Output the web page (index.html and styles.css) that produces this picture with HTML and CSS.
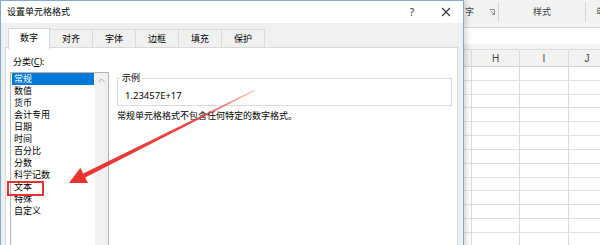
FILE: index.html
```html
<!DOCTYPE html>
<html lang="zh-CN">
  <head>
    <meta charset="UTF-8" />
    <meta name="viewport" content="width=device-width, initial-scale=1.0" />
    <title>设置单元格格式</title>
    <link rel="stylesheet" href="styles.css">
  </head>
  <body>
    <div class="screen">
      <div class="dialog">
        <div class="titlebar">
          <span class="title">设置单元格格式</span>
          <span class="tbtn help">?</span>
          <span class="tbtn close">
            <svg width="10" height="10" viewBox="0 0 10 10"><path d="M1 1L9 9M9 1L1 9" stroke="#333" stroke-width="1.1" fill="none"/></svg>
          </span>
        </div>
        <div class="body">
          <div class="tabs">
            <div class="tab active">数字</div>
            <div class="tab">对齐</div>
            <div class="tab">字体</div>
            <div class="tab">边框</div>
            <div class="tab">填充</div>
            <div class="tab">保护</div>
          </div>
          <div class="panel">
            <div class="label">分类(<u>C</u>):</div>
            <div class="listbox">
              <ul class="items">
                <li class="selected">常规</li>
                <li>数值</li>
                <li>货币</li>
                <li>会计专用</li>
                <li>日期</li>
                <li>时间</li>
                <li>百分比</li>
                <li>分数</li>
                <li>科学记数</li>
                <li>文本</li>
                <li>特殊</li>
                <li>自定义</li>
              </ul>
              <div class="scrollbar">
                <svg width="7" height="5" viewBox="0 0 7 5"><path d="M0.5 4L3.5 1L6.5 4" stroke="#a6a6a6" stroke-width="1" fill="none"/></svg>
              </div>
            </div>
            <div class="detail">
              <fieldset class="sample">
                <legend>示例</legend>
                <div class="value">1.23457E+17</div>
              </fieldset>
              <p class="desc">常规单元格格式不包含任何特定的数字格式。</p>
            </div>
          </div>
        </div>
      </div>

      <div class="sheet">
        <div class="ribbon">
          <div class="grp-end">
            <span>字</span>
            <svg width="6" height="6" viewBox="0 0 6 6"><path d="M0.5 0.5H5.5V5.5M2 2L5 5M3 5.5H5.5V3" stroke="#8a8a8a" stroke-width="1" fill="none"/></svg>
          </div>
          <div class="sep"></div>
          <div class="grp">样式</div>
          <div class="sep"></div>
          <div class="grp-cut">单</div>
        </div>
        <div class="formula"></div>
        <div class="gap"></div>
        <div class="grid">
          <div class="col col-g"><div class="head"></div><div class="cells"></div></div>
          <div class="col col-h"><div class="head">H</div><div class="cells"></div></div>
          <div class="col col-i"><div class="head">I</div><div class="cells"></div></div>
          <div class="col col-j"><div class="head">J</div><div class="cells"></div></div>
        </div>
      </div>

      <svg class="annot" width="600" height="245" viewBox="0 0 600 245">
        <defs>
          <linearGradient id="fade" gradientUnits="userSpaceOnUse" x1="254" y1="90" x2="69" y2="183">
            <stop offset="0" stop-color="#e8312f" stop-opacity="0.35"/>
            <stop offset="0.35" stop-color="#e8312f" stop-opacity="0.9"/>
            <stop offset="1" stop-color="#e8312f"/>
          </linearGradient>
        </defs>
        <polygon fill="url(#fade)" points="69,183 88,183 85.2,177.4 254.4,91 254,90.1 83.2,173.4 80.4,167.8"/>
        <rect x="8" y="182" width="35" height="13" fill="none" stroke="#e8312f" stroke-width="2"/>
      </svg>
    </div>
  </body>
</html>
```

FILE: styles.css
```css
body {
  margin: 0;
  font-family: "Noto Sans", "Noto Sans CJK SC", sans-serif;
  font-size: 9px;
  color: #000;
}

.screen {
  position: relative;
  width: 600px;
  height: 245px;
  overflow: hidden;
  display: flex;
}

/* dialog */
.dialog {
  position: relative;
  z-index: 1;
  box-sizing: border-box;
  width: 464px;
  height: 330px;
  flex-shrink: 0;
  display: flex;
  flex-direction: column;
  background: #f0f0f0;
  border: 1px solid #7faad6;
  border-bottom: none;
  box-shadow: 2px 0 6px rgba(0, 0, 0, 0.18);
}

.titlebar {
  height: 22px;
  display: flex;
  align-items: center;
  background: #fff;
  padding-left: 6px;
}
.title {
  line-height: 12px;
}
.tbtn {
  width: 34px;
  text-align: center;
  line-height: 12px;
  display: flex;
  justify-content: center;
  align-items: center;
}
.help {
  margin-left: auto;
  font-size: 10px;
  color: #333;
}

.body {
  flex: 1;
  display: flex;
  flex-direction: column;
  padding: 6px 5px 0 4px;
}

.tabs {
  display: flex;
  padding-left: 3px;
  height: 19px;
}
.tab {
  box-sizing: border-box;
  width: 43px;
  height: 19px;
  line-height: 18px;
  text-align: center;
  border-top: 1px solid #dadada;
  border-right: 1px solid #dadada;
}
.tab.active {
  width: 42px;
  height: 21px;
  margin-top: -1px;
  background: #fff;
  border: 1px solid #d4d4d4;
  border-bottom: none;
  position: relative;
  z-index: 1;
}

.panel {
  flex: 1;
  margin-top: -1px;
  background: #fff;
  border: 1px solid #d9d9d9;
  display: grid;
  grid-template-columns: 99px 1fr;
  grid-template-rows: 12px 1fr;
  column-gap: 8px;
  row-gap: 4px;
  padding: 8px 5px 0 4px;
}

.label {
  grid-column: 1 / 3;
  padding-left: 3px;
  line-height: 12px;
}

.listbox {
  display: flex;
  border: 1px solid #b4b4b4;
}
.items {
  flex: 1;
  list-style: none;
  margin: 0;
  padding: 0 1px;
}
.items li {
  height: 12px;
  line-height: 12px;
  padding-left: 2px;
}
.items li.selected {
  background: #0078d7;
  color: #fff;
}
.scrollbar {
  width: 13px;
  background: #f0f0f0;
  display: flex;
  justify-content: center;
  padding-top: 5px;
  box-sizing: border-box;
}
.scrollbar svg {
  display: block;
}

.detail {
  display: flex;
  flex-direction: column;
}
.sample {
  margin: 0;
  min-width: 0;
  padding: 6px 7px 3px 2px;
  border: 1px solid #dcdcdc;
}
.sample legend {
  padding: 0 2px;
  line-height: 12px;
}
.value {
  padding-left: 5px;
  line-height: 12px;
  font-size: 9.5px;
}
.desc {
  margin: 4px 0 0;
  line-height: 12px;
}

/* spreadsheet behind the dialog */
.sheet {
  flex: 1;
  display: flex;
  flex-direction: column;
  background: #f3f3f3;
  color: #444;
}

.ribbon {
  box-sizing: border-box;
  height: 28px;
  padding-top: 2px;
  display: flex;
  align-items: flex-start;
  border-bottom: 1px solid #d8d8d8;
}
.ribbon > div {
  height: 20px;
  line-height: 20px;
}
.grp-end {
  width: 34px;
  box-sizing: border-box;
  display: flex;
  justify-content: space-between;
  align-items: center;
  padding: 0 3px 0 1px;
}
.sep {
  width: 1px;
  background: #d4d4d4;
}
.grp {
  width: 86px;
  text-align: center;
}
.grp-cut {
  padding-left: 10px;
}

.formula {
  height: 16px;
  background: #fff;
}
.gap {
  height: 5px;
}

.grid {
  flex: 1;
  display: flex;
}
.col {
  box-sizing: border-box;
  display: flex;
  flex-direction: column;
  border-right: 1px solid #dadada;
}
.col-g {
  width: 8px;
}
.col-h {
  width: 48px;
}
.col-i {
  width: 49px;
}
.col-j {
  flex: 1;
  border-right: none;
}
.head {
  box-sizing: border-box;
  height: 18px;
  line-height: 17px;
  text-align: center;
  font-family: "Liberation Sans", sans-serif;
  font-size: 10px;
  background: #f3f3f3;
  border-top: 1px solid #dadada;
  border-bottom: 1px solid #d0d0d0;
}
.cells {
  flex: 1;
  background: repeating-linear-gradient(to bottom, #fff 0, #fff 12.83px, #e1e1e1 12.83px, #e1e1e1 13.83px);
}
.col-g .cells {
  background-color: #f7f7f7;
}

.annot {
  position: absolute;
  left: 0;
  top: 0;
  z-index: 2;
  pointer-events: none;
}
```
